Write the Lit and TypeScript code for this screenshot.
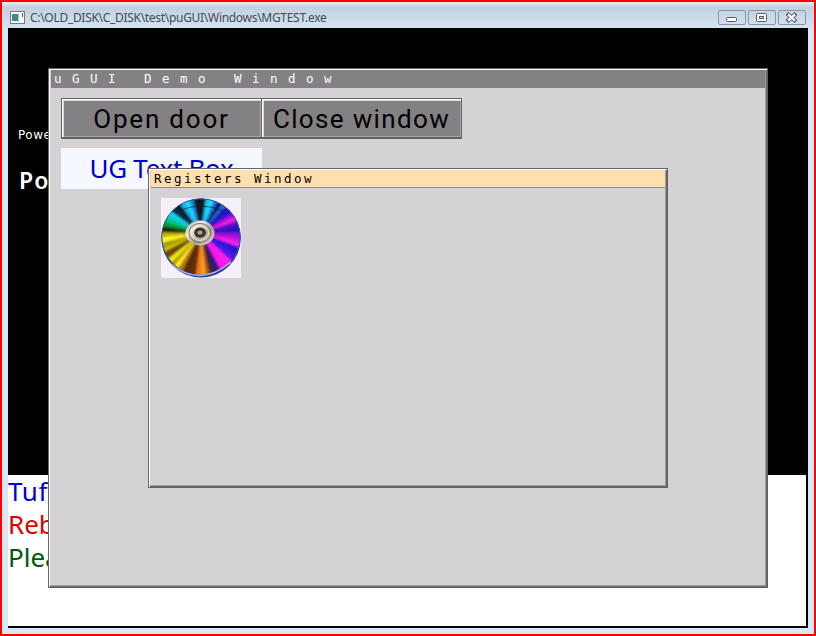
import { LitElement, html, css, svg } from "lit";
import { customElement } from "lit/decorators.js";

// Wedge of the disc surface: start angle, end angle (degrees clockwise from the top), colour.
const WEDGES: [number, number, string][] = [
  [-8, 8, "#17121c"], [8, 15, "#12c8f4"], [15, 21, "#22e4ff"], [21, 28, "#1478e8"], [28, 36, "#180f4a"],
  [36, 42, "#1c6fe0"], [42, 50, "#2518a8"], [50, 58, "#1a12e0"], [58, 64, "#b010d8"], [64, 72, "#e61be8"],
  [72, 78, "#6a08c0"], [78, 90, "#2a12c0"], [90, 98, "#a010d8"], [98, 104, "#d814d8"], [104, 110, "#ff20f0"], [110, 122, "#2a18d8"],
  [122, 132, "#5018e0"], [132, 141, "#f020f0"], [141, 152, "#ff18e8"], [152, 160, "#2a1690"], [160, 168, "#3c2438"],
  [168, 173, "#b05a10"], [173, 180, "#ff9a20"], [180, 187, "#f07818"], [187, 196, "#6a2c10"], [196, 206, "#5a2c10"],
  [206, 213, "#b87a10"], [213, 219, "#fff020"], [219, 225, "#b89a08"], [225, 232, "#f4e818"], [232, 243, "#6a4408"],
  [243, 248, "#d8c400"], [248, 256, "#a89a04"], [256, 264, "#fff820"], [264, 271, "#c8b408"], [271, 280, "#142a08"], [280, 287, "#0a9838"],
  [287, 293, "#06c878"], [293, 300, "#08c8c8"], [300, 306, "#10e0f0"], [306, 316, "#0c2a4a"], [316, 324, "#181020"],
  [324, 332, "#12b4e8"], [332, 340, "#20dcff"], [340, 347, "#1090e0"], [347, 352, "#20182a"],
];

function wedge([a, b, fill]: [number, number, string]) {
  const pt = (d: number) => {
    const r = (d * Math.PI) / 180;
    return `${(40 + 60 * Math.sin(r)).toFixed(2)} ${(35 - 60 * Math.cos(r)).toFixed(2)}`;
  };
  return svg`<path d="M40 35 L${pt(a)} L${pt(b + 0.6)} Z" fill=${fill}></path>`;
}

@customElement("compact-disc")
export class CompactDisc extends LitElement {
  static styles = css`
    :host { display: block; width: 80px; height: 80px; background: #f5f0f7; }
    svg { display: block; }
  `;
  render() {
    return html`<svg width="80" height="80" viewBox="0 0 80 80">
      <defs>
        <clipPath id="face"><ellipse cx="40" cy="39" rx="39.5" ry="38.5"></ellipse></clipPath>
        <filter id="soft"><feGaussianBlur stdDeviation="1"></feGaussianBlur></filter>
        <linearGradient id="hub" x1="0" y1="0" x2="1" y2="1">
          <stop offset="0" stop-color="#8f8a80"></stop><stop offset=".3" stop-color="#f3efe4"></stop>
          <stop offset=".6" stop-color="#aaa293"></stop><stop offset="1" stop-color="#e9e3d4"></stop>
        </linearGradient>
      </defs>
      <ellipse cx="40" cy="40.3" rx="39.7" ry="39.2" fill="#233f9a"></ellipse>
      <g clip-path="url(#face)">
        <g filter="url(#soft)">${WEDGES.map(wedge)}</g>
        <path d="M18 13 Q40 3 62 13" fill="none" stroke="#101828" stroke-width="1" opacity=".6"></path>
      </g>
      <ellipse cx="40" cy="39" rx="39.2" ry="38.2" fill="none" stroke="#2a55a8" stroke-width="1"></ellipse>
      <path d="M10 66 Q39 90 70 64" fill="none" stroke="#b9b4e0" stroke-width="1.4"></path>
      <ellipse cx="39" cy="35" rx="14.5" ry="12.5" fill="url(#hub)"></ellipse>
      <ellipse cx="39" cy="35" rx="11" ry="9.5" fill="none" stroke="#746d62" stroke-width="1"></ellipse>
      <ellipse cx="39" cy="35" rx="8.5" ry="7.3" fill="none" stroke="#eee8dc" stroke-width="1"></ellipse>
      <ellipse cx="39" cy="34.6" rx="5.8" ry="5" fill="#3c2e2c"></ellipse>
      <ellipse cx="39" cy="34.6" rx="2.6" ry="2.2" fill="#b5a294"></ellipse>
    </svg>`;
  }
}

@customElement("app-root")
export class AppRoot extends LitElement {
  static styles = css`
    * { box-sizing: border-box; }
    :host {
      display: flex; flex-direction: column; box-sizing: border-box; width: 816px; height: 636px;
      border: 2px solid #fe0000; padding: 0 6px 6px; overflow: hidden;
      background: #d9e6f3;
      font-family: "Noto Sans", sans-serif;
      white-space: nowrap;
    }
    .caption {
      display: flex; align-items: center; flex: none; height: 26px; margin: 0 -6px; padding: 5px 8px 0 8px;
      background: linear-gradient(#e6eef5 0, #c0d1e2 5px, #d5e2ef 25px);
      font-size: 12px; line-height: 20px; color: #45494f;
    }
    .caption .title { flex: 1; margin-left: 5px; letter-spacing: -0.3px; }
    .caption svg { display: block; }
    .screen { position: relative; height: 600px; background: #000; overflow: hidden; }
    .powered { padding: 99px 0 0 10px; font: 12px/16px "DejaVu Sans", sans-serif; color: #fff; height: 138px; letter-spacing: .5px; }
    .brand { padding-left: 11px; font: 600 23px/28px "Noto Sans", sans-serif; color: #fff; height: 309px; letter-spacing: 1.2px; }
    .console { width: 798px; height: 151px; background: #fff; font-size: 26px; line-height: 33px; }
    .blue { color: #0000d8; letter-spacing: .6px; } .red { color: #e00000; } .green { color: #005a00; }
    .window {
      position: absolute; background: #d4d2d5; border: 1px solid; border-color: #686668 #626062 #626062 #686668;
      box-shadow: inset 1px 1px #fff, inset -1px -1px #6a686a, inset -2px -2px #a09ea0;
      padding: 2px;
    }
    .demo { left: 40px; top: 40px; width: 720px; height: 520px; }
    .registers { left: 140px; top: 140px; width: 520px; height: 320px; }
    .bar { height: 18px; padding-left: 3px; margin-top: -1px; font: 12.5px/18px "DejaVu Sans Mono", monospace; }
    .demo > .bar { height: 18px; background: #838183; color: #fff; letter-spacing: 10.48px; }
    .registers > .bar { background: #ffdfad; color: #000; letter-spacing: 2.48px; border-bottom: 1px solid #8d8b8d; height: 18px; }
    .buttons { display: flex; margin: 10px 0 0 10px; }
    .button {
      width: 201px; height: 41px; margin-right: -1px; text-align: center; font: 26px/40px Roboto, sans-serif;
      background: #838183; border: 1px solid #646264; border-bottom-width: 2px; color: #000;
      box-shadow: inset 1px 1px #fff, inset 2px 2px #d8d6d8, inset -1px -1px #a4a2a4;
    }
    .open { letter-spacing: 1.8px; } .close { letter-spacing: 1.35px; }
    .textbox { width: 201px; height: 41px; margin: 9px 0 0 10px; background: #f6f8ff; color: #0000d0; font-size: 26px; line-height: 40px; text-align: center; letter-spacing: -.3px; }
    compact-disc { margin: 10px 0 0 10px; }
  `;

  private controls() {
    return html`<svg width="88" height="16" viewBox="0 0 88 16" fill="none">
      <g stroke="#8795a8"><rect x=".5" y=".5" width="27" height="14" rx="1.5"></rect><rect x="30.5" y=".5" width="27" height="14" rx="1.5"></rect><rect x="60.5" y=".5" width="27" height="14" rx="1.5"></rect></g>
      <rect x="8.5" y="7.5" width="10" height="4" rx="1" fill="#fff" stroke="#555a63"></rect>
      <rect x="38.5" y="3.5" width="10" height="8" rx="1" fill="#fff" stroke="#555a63"></rect>
      <rect x="41.5" y="6.5" width="4" height="2" fill="#c9d6e4" stroke="#555a63"></rect>
      <path d="M69 3.5L78 11.5M78 3.5L69 11.5" stroke="#555a63" stroke-width="4.2"></path>
      <path d="M70 4.4L77 10.6M77 4.4L70 10.6" stroke="#fff" stroke-width="2.4"></path>
    </svg>`;
  }

  render() {
    return html`
      <div class="caption">
        <svg width="15" height="13" viewBox="0 0 15 13"><rect x=".5" y=".5" width="14" height="12" fill="#f8f9fa" stroke="#777c80"></rect><rect x="2" y="3" width="6" height="7" fill="#438b88"></rect><rect x="8" y="3" width="1" height="8" fill="#b8bec2"></rect><path d="M12.5 2v4" stroke="#556"></path></svg>
        <span class="title">C:\\OLD_DISK\\C_DISK\\test\\puGUI\\Windows\\MGTEST.exe</span>
        ${this.controls()}
      </div>
      <div class="screen">
        <div class="powered">Powe</div>
        <div class="brand">Po</div>
        <div class="console"><div class="blue">Tuf</div><div class="red">Reb</div><div class="green">Plea</div></div>
        <section class="window demo">
          <div class="bar">uGUI Demo Window</div>
          <div class="buttons"><div class="button open">Open door</div><div class="button close">Close window</div></div>
          <div class="textbox">UG Text Box</div>
        </section>
        <section class="window registers">
          <div class="bar">Registers Window</div>
          <compact-disc></compact-disc>
        </section>
      </div>`;
  }
}
